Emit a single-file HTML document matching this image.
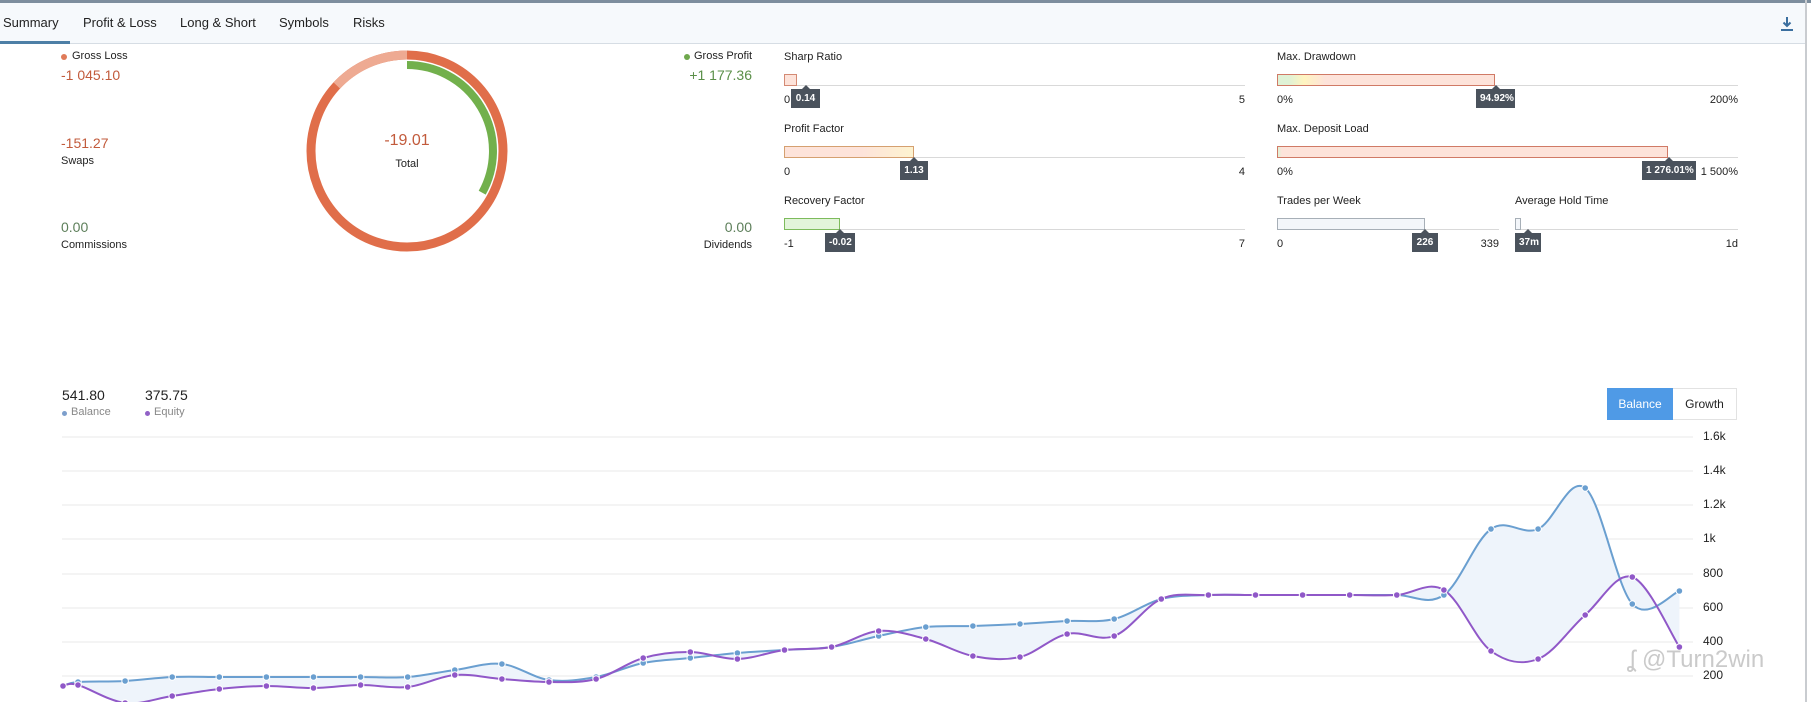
<!DOCTYPE html>
<html><head><meta charset="utf-8">
<style>
*{margin:0;padding:0;box-sizing:border-box}
body{width:1811px;height:702px;overflow:hidden;background:#fff;font-family:"Liberation Sans",sans-serif;color:#222;position:relative}
.a{position:absolute;white-space:nowrap}
.topline{left:0;top:0;width:1811px;height:3px;background:#7d8e9e}
.tabbar{left:0;top:3px;width:1806px;height:41px;background:#f6f9fc;border-bottom:1px solid #d6dde4}
.tab{top:15px;font-size:13px;color:#222}
.rb{left:1805px;top:0;width:2px;height:702px;background:#c9ccd0}
.lbl{font-size:11px;color:#222}
.red{color:#c25b3c}
.grn{color:#5a8f48}
.bar{height:12px;border:1px solid #d48a74;background:#fde3da}
.track{height:1px;background:#d9d9d9}
.tip{background:#4a525c;color:#fff;font-size:10px;font-weight:bold;height:19px;line-height:19px;padding:0 4px;text-align:center}
.tip:before{content:"";position:absolute;left:50%;top:-4px;margin-left:-4px;border-left:4px solid transparent;border-right:4px solid transparent;border-bottom:4px solid #4a525c}
.ax{font-size:11px;color:#222}
.yl{font-size:12px;color:#222;left:1703px}
.v{font-size:14px}
</style></head><body>
<div class="a topline"></div>
<div class="a tabbar"></div>
<div class="a" style="left:0;top:41px;width:70px;height:3px;background:#4d7fa6"></div>
<div class="a tab" style="left:3px">Summary</div>
<div class="a tab" style="left:83px">Profit &amp; Loss</div>
<div class="a tab" style="left:180px">Long &amp; Short</div>
<div class="a tab" style="left:279px">Symbols</div>
<div class="a tab" style="left:353px">Risks</div>
<svg class="a" style="left:1780px;top:16px" width="14" height="16" viewBox="0 0 14 16"><path d="M7 1v9M3.5 6.5L7 10l3.5-3.5" stroke="#3b6f9f" stroke-width="2" fill="none"/><path d="M1 14h12" stroke="#3b6f9f" stroke-width="2"/></svg>
<div class="a rb"></div>

<div class="a" style="left:61px;top:54px;width:6px;height:6px;border-radius:3px;background:#e07b59"></div>
<div class="a lbl" style="left:72px;top:50px">Gross Loss</div>
<div class="a red v" style="left:61px;top:67px">-1 045.10</div>
<div class="a red v" style="left:61px;top:135px">-151.27</div>
<div class="a lbl" style="left:61px;top:155px">Swaps</div>
<div class="a v" style="left:61px;top:219px;color:#5d7f5a">0.00</div>
<div class="a lbl" style="left:61px;top:239px">Commissions</div>

<svg class="a" style="left:300px;top:44px" width="214" height="214" viewBox="0 0 214 214">
<g transform="translate(107,107)">
<circle r="96" fill="none" stroke="#e06e4a" stroke-width="9"/>
<path d="M -70.2 -65.5 A 96 96 0 0 1 0 -96" fill="none" stroke="#eeaa92" stroke-width="9"/>
<path d="M 0 -86 A 86 86 0 0 1 75.2 41.7" fill="none" stroke="#72b04c" stroke-width="8"/>
</g></svg>
<div class="a red" style="left:367px;top:132px;width:80px;text-align:center;font-size:16px">-19.01</div>
<div class="a lbl" style="left:367px;top:158px;width:80px;text-align:center">Total</div>

<div class="a" style="left:684px;top:54px;width:6px;height:6px;border-radius:3px;background:#6fa84d"></div>
<div class="a lbl" style="left:694px;top:50px">Gross Profit</div>
<div class="a grn v" style="left:652px;top:67px;width:100px;text-align:right">+1 177.36</div>
<div class="a v" style="left:652px;top:219px;width:100px;text-align:right;color:#5d7f5a">0.00</div>
<div class="a lbl" style="left:652px;top:239px;width:100px;text-align:right">Dividends</div>

<div class="a lbl" style="left:784px;top:51px">Sharp Ratio</div>
<div class="a track" style="left:784px;top:85px;width:461px"></div>
<div class="a bar" style="left:784px;top:74px;width:13px"></div>
<div class="a ax" style="left:784px;top:94px">0</div>
<div class="a ax" style="left:1200px;top:94px;width:45px;text-align:right">5</div>
<div class="a tip" style="left:791px;top:89px;width:29px">0.14</div>

<div class="a lbl" style="left:784px;top:123px">Profit Factor</div>
<div class="a track" style="left:784px;top:157px;width:461px"></div>
<div class="a bar" style="left:784px;top:146px;width:130px;background:linear-gradient(90deg,#fde3da 60%,#fdf3d0);border-color:#d5a070"></div>
<div class="a ax" style="left:784px;top:166px">0</div>
<div class="a ax" style="left:1200px;top:166px;width:45px;text-align:right">4</div>
<div class="a tip" style="left:900px;top:161px;width:28px">1.13</div>

<div class="a lbl" style="left:784px;top:195px">Recovery Factor</div>
<div class="a track" style="left:784px;top:229px;width:461px"></div>
<div class="a bar" style="left:784px;top:218px;width:56px;background:#e2f4da;border-color:#7dbb5c"></div>
<div class="a ax" style="left:784px;top:238px">-1</div>
<div class="a ax" style="left:1200px;top:238px;width:45px;text-align:right">7</div>
<div class="a tip" style="left:825px;top:233px;width:30px">-0.02</div>

<div class="a lbl" style="left:1277px;top:51px">Max. Drawdown</div>
<div class="a track" style="left:1277px;top:85px;width:461px"></div>
<div class="a bar" style="left:1277px;top:74px;width:218px;background:linear-gradient(90deg,#dff2d6 0,#dff2d6 5%,#fff4c0 12%,#fde3da 22%);border-color:#d07a66"></div>
<div class="a ax" style="left:1277px;top:94px">0%</div>
<div class="a ax" style="left:1688px;top:94px;width:50px;text-align:right">200%</div>
<div class="a tip" style="left:1476px;top:89px;width:39px">94.92%</div>

<div class="a lbl" style="left:1277px;top:123px">Max. Deposit Load</div>
<div class="a track" style="left:1277px;top:157px;width:461px"></div>
<div class="a bar" style="left:1277px;top:146px;width:391px;background:linear-gradient(90deg,#dff2d6 0,#fde3da 1%);border-color:#d07a66"></div>
<div class="a ax" style="left:1277px;top:166px">0%</div>
<div class="a ax" style="left:1688px;top:166px;width:50px;text-align:right">1 500%</div>
<div class="a tip" style="left:1642px;top:161px;width:54px">1 276.01%</div>

<div class="a lbl" style="left:1277px;top:195px">Trades per Week</div>
<div class="a track" style="left:1277px;top:229px;width:222px"></div>
<div class="a bar" style="left:1277px;top:218px;width:148px;background:#f3f6fa;border-color:#a7afb7"></div>
<div class="a ax" style="left:1277px;top:238px">0</div>
<div class="a ax" style="left:1459px;top:238px;width:40px;text-align:right">339</div>
<div class="a tip" style="left:1412px;top:233px;width:26px">226</div>

<div class="a lbl" style="left:1515px;top:195px">Average Hold Time</div>
<div class="a track" style="left:1515px;top:229px;width:223px"></div>
<div class="a bar" style="left:1515px;top:218px;width:6px;background:#f3f6fa;border-color:#a7afb7"></div>
<div class="a ax" style="left:1698px;top:238px;width:40px;text-align:right">1d</div>
<div class="a tip" style="left:1515px;top:233px;width:26px">37m</div>

<div class="a" style="left:62px;top:387px;font-size:14px">541.80</div>
<div class="a" style="left:145px;top:387px;font-size:14px">375.75</div>
<div class="a" style="left:62px;top:411px;width:5px;height:5px;border-radius:3px;background:#7d9fcc"></div>
<div class="a" style="left:71px;top:406px;font-size:11px;color:#888">Balance</div>
<div class="a" style="left:145px;top:411px;width:5px;height:5px;border-radius:3px;background:#9161c6"></div>
<div class="a" style="left:154px;top:406px;font-size:11px;color:#888">Equity</div>

<div class="a" style="left:1607px;top:388px;width:66px;height:32px;background:#4f9ae6;color:#fff;font-size:12px;line-height:32px;text-align:center">Balance</div>
<div class="a" style="left:1673px;top:388px;width:64px;height:32px;border:1px solid #e2e2e2;border-left:none;font-size:12px;line-height:30px;text-align:center">Growth</div>

<svg id="ch" class="a" style="left:0;top:0" width="1811" height="702"></svg>
<div class="a yl" style="top:429px">1.6k</div>
<div class="a yl" style="top:463px">1.4k</div>
<div class="a yl" style="top:497px">1.2k</div>
<div class="a yl" style="top:531px">1k</div>
<div class="a yl" style="top:566px">800</div>
<div class="a yl" style="top:600px">600</div>
<div class="a yl" style="top:634px">400</div>
<div class="a yl" style="top:668px">200</div>
<div class="a" style="left:1627px;top:646px;font-size:24px;color:rgba(150,150,150,0.5)">ʆ @Turn2win</div>

<script>
var bal=[686,682,681,677,677,677,677,677,677,670,664,680,677,663,658,653,650,647,636,627,626,624,621,619,599,595,595,595,595,595,595,529,529,488,604,591];
var pur=[686,685,703,696,689,686,688,685,687,675,679,682,679,658,652,659,650,647,631,639,656,657,634,636,599,595,595,595,595,595,590,651,659,615,577,647];
function xs(i){return i==0?63:78+47.1*(i-1);}
function pts(a){return a.map(function(y,i){return[xs(i),y];});}
function path(p,move){var d=(move?"M":"L")+p[0][0]+" "+p[0][1];for(var i=0;i<p.length-1;i++){var p0=p[i-1]||p[i],p1=p[i],p2=p[i+1],p3=p[i+2]||p2;var t=0.17;d+=" C"+(p1[0]+(p2[0]-p0[0])*t)+" "+(p1[1]+(p2[1]-p0[1])*t)+" "+(p2[0]-(p3[0]-p1[0])*t)+" "+(p2[1]-(p3[1]-p1[1])*t)+" "+p2[0]+" "+p2[1];}return d;}
var B=pts(bal),P=pts(pur);
var s='';
[437,471,505,539,574,608,642,676].forEach(function(y){s+='<line x1="62" x2="1693" y1="'+y+'" y2="'+y+'" stroke="#e8e8e8"/>';});
s+='<path d="'+path(B,true)+' '+path(P.slice().reverse(),false)+'Z" fill="#eef4fb"/>';
s+='<path d="'+path(B,true)+'" fill="none" stroke="#6a9fd0" stroke-width="2"/>';
s+='<path d="'+path(P,true)+'" fill="none" stroke="#9058c8" stroke-width="2"/>';
B.forEach(function(p,i){if(i)s+='<circle cx="'+p[0]+'" cy="'+p[1]+'" r="3.3" fill="#6a9fd0" stroke="#fff" stroke-width="1"/>';});
P.forEach(function(p){s+='<circle cx="'+p[0]+'" cy="'+p[1]+'" r="3.3" fill="#9058c8" stroke="#fff" stroke-width="1"/>';});
document.getElementById('ch').innerHTML=s;
</script>
</body></html>
